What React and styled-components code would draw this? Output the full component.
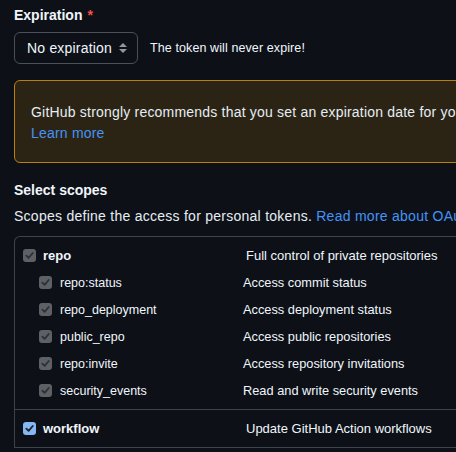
import styled, { createGlobalStyle } from 'styled-components';

const GlobalStyle = createGlobalStyle`
  html, body {
    margin: 0;
    padding: 0;
    background: #0d1117;
    overflow: hidden;
  }
  body {
    font-family: "Liberation Sans", Arial, sans-serif;
    color: #e6edf3;
  }
`;

const Page = styled.div`
  width: 760px;
  padding: 5px 14px 0;
  white-space: nowrap;
`;

const Label = styled.div`
  font-size: 14px;
  font-weight: 700;
  line-height: 21px;
  color: #f0f6fc;

  span {
    color: #f85149;
    margin-left: 5px;
  }
`;

const ExpirationRow = styled.div`
  display: flex;
  align-items: center;
  gap: 12px;
  margin-top: 6px;
`;

const SelectBox = styled.div`
  display: flex;
  align-items: center;
  justify-content: space-between;
  box-sizing: border-box;
  width: 124px;
  height: 32px;
  padding: 0 9px 0 12px;
  border: 1px solid #4a5058;
  border-radius: 6px;
  background: #0d1117;
  font-size: 14px;
  letter-spacing: 0.2px;
  color: #f0f6fc;
`;

const Hint = styled.div`
  font-size: 12.5px;
  letter-spacing: 0.1px;
  color: #f0f6fc;
`;

const Warning = styled.div`
  margin-top: 16px;
  padding: 21px 16px 18px;
  border: 1px solid #bb8009;
  border-radius: 6px;
  background: #2b2415;
  font-size: 14px;
  line-height: 21px;
  letter-spacing: 0.2px;
  color: #e6edf3;
`;

const Link = styled.a`
  color: #4493f8;
  text-decoration: none;
`;

const Heading = styled.div`
  margin-top: 17px;
  font-size: 14px;
  font-weight: 700;
  line-height: 21px;
  color: #f0f6fc;
`;

const Note = styled.div`
  margin-top: 5px;
  font-size: 14px;
  line-height: 21px;
  letter-spacing: 0.26px;
  color: #e6edf3;
`;

const ScopeTable = styled.div`
  margin-top: 9px;
  border: 1px solid #3d444d;
  border-bottom: none;
  border-radius: 6px 6px 0 0;
`;

const Group = styled.div`
  padding: 5px 0;
  border-bottom: 1px solid #3d444d;
`;

const Row = styled.div`
  display: grid;
  grid-template-columns: ${(p) => (p.$sub ? '228px' : '231px')} 1fr;
  align-items: center;
  height: 27px;
  font-size: 13px;
`;

const Scope = styled.label`
  display: flex;
  align-items: center;
  gap: ${(p) => (p.$sub ? '8px' : '7px')};
  padding-left: ${(p) => (p.$sub ? '24px' : '8px')};
  font-size: ${(p) => (p.$sub ? '12.5px' : '13px')};
  font-weight: ${(p) => (p.$sub ? 400 : 700)};
  color: #f0f6fc;
`;

const Box = styled.span`
  display: inline-flex;
  align-items: center;
  justify-content: center;
  width: 13px;
  height: 13px;
  border-radius: 3px;
  background: ${(p) => (p.$active ? '#85b8f2' : '#5d6064')};
`;

const Desc = styled.div`
  color: #f0f6fc;
  font-size: ${(p) => (p.$sub ? '12.8px' : '13px')};
`;

const Check = ({ active }) => (
  <Box $active={active}>
    <svg width="9" height="9" viewBox="0 0 10 10">
      <path
        d="M1.5 5.2 L4 7.6 L8.6 2.2"
        fill="none"
        stroke={active ? '#1f2328' : '#2e3136'}
        strokeWidth="2"
        strokeLinecap="round"
        strokeLinejoin="round"
      />
    </svg>
  </Box>
);

const Arrows = () => (
  <svg width="10" height="12" viewBox="0 0 10 12">
    <path d="M5 1 L9 5 H1 Z" fill="#9198a1" />
    <path d="M5 11 L9 7 H1 Z" fill="#9198a1" />
  </svg>
);

const repoScopes = [
  ['repo:status', 'Access commit status'],
  ['repo_deployment', 'Access deployment status'],
  ['public_repo', 'Access public repositories'],
  ['repo:invite', 'Access repository invitations'],
  ['security_events', 'Read and write security events'],
];

export default function App() {
  return (
    <Page>
      <GlobalStyle />
      <Label>
        Expiration<span>*</span>
      </Label>
      <ExpirationRow>
        <SelectBox>
          No expiration
          <Arrows />
        </SelectBox>
        <Hint>The token will never expire!</Hint>
      </ExpirationRow>

      <Warning>
        GitHub strongly recommends that you set an expiration date for your token to help keep your information secure.
        <br />
        <Link href="#">Learn more</Link>
      </Warning>

      <Heading>Select scopes</Heading>
      <Note>
        Scopes define the access for personal tokens. <Link href="#">Read more about OAuth scopes.</Link>
      </Note>

      <ScopeTable>
        <Group>
          <Row>
            <Scope>
              <Check />
              repo
            </Scope>
            <Desc>Full control of private repositories</Desc>
          </Row>
          {repoScopes.map(([name, desc]) => (
            <Row key={name} $sub>
              <Scope $sub>
                <Check />
                {name}
              </Scope>
              <Desc $sub>{desc}</Desc>
            </Row>
          ))}
        </Group>
        <Group>
          <Row>
            <Scope>
              <Check active />
              workflow
            </Scope>
            <Desc>Update GitHub Action workflows</Desc>
          </Row>
        </Group>
      </ScopeTable>
    </Page>
  );
}
